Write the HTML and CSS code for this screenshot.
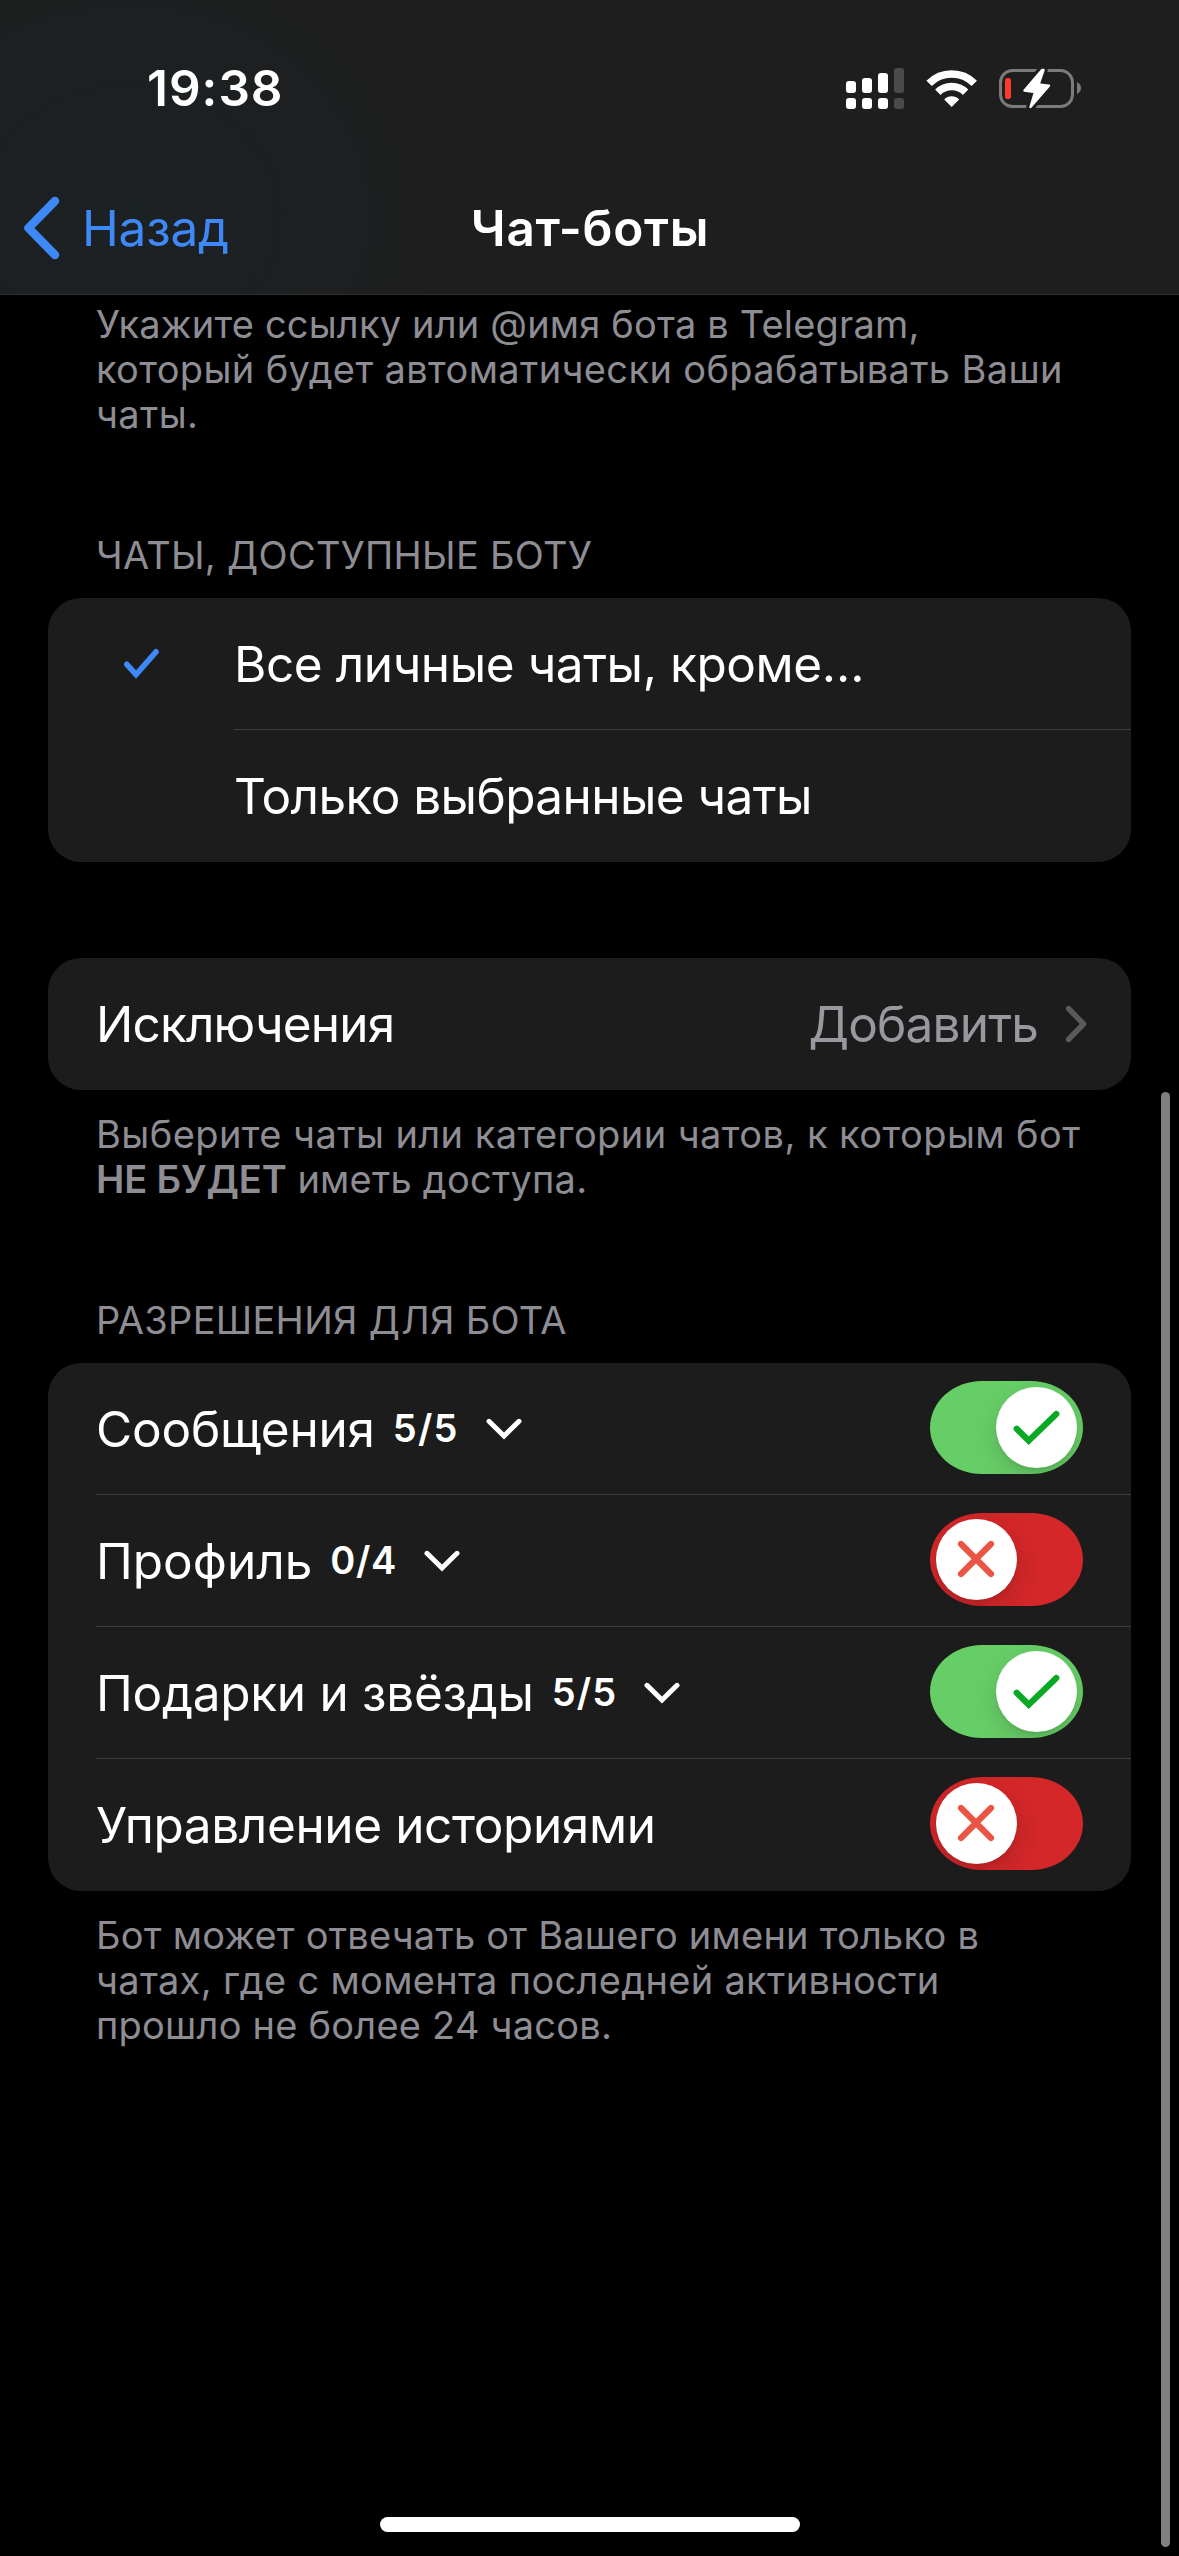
FILE: index.html
```
<!DOCTYPE html>
<html lang="ru">
<head>
<meta charset="utf-8">
<title>Чат-боты</title>
<link rel="stylesheet" href="styles.css">
</head>
<body>
<header class="header">
  <div class="status">
    <span class="time">19:38</span>
    <div class="status-icons">
      <svg class="cellular" width="60" height="42" viewBox="0 0 60 42" fill="#fff">
        <rect x="1" y="14" width="10" height="12" rx="3"/>
        <rect x="17" y="11" width="10" height="15" rx="3"/>
        <rect x="33" y="6" width="10" height="20" rx="3"/>
        <rect x="49" y="1" width="10" height="25" rx="3" fill="#4a4a4a"/>
        <rect x="1" y="31" width="10" height="11" rx="3"/>
        <rect x="17" y="31" width="10" height="11" rx="3"/>
        <rect x="33" y="31" width="10" height="11" rx="3"/>
        <rect x="49" y="31" width="10" height="11" rx="3" fill="#4a4a4a"/>
      </svg>
      <svg class="wifi" width="52" height="42" viewBox="0 0 52 42">
        <g fill="none" stroke="#fff" stroke-width="7.6">
          <path d="M3.1 16.4A32 32 0 0 1 48.3 16.4"/>
          <path d="M11.8 25.3A19.7 19.7 0 0 1 39.6 25.3"/>
        </g>
        <path d="M18.2 32.5A10.5 10.5 0 0 1 33.2 32.5L25.7 40Z" fill="#fff"/>
      </svg>
      <svg class="battery" width="84" height="42" viewBox="0 0 84 42">
        <rect x="2.5" y="3.5" width="72" height="36" rx="12" fill="none" stroke="#7b7b7b" stroke-width="3"/>
        <path d="M79 15Q83 17.5 83 21T79 27Z" fill="#7b7b7b"/>
        <rect x="7" y="11" width="6" height="21" rx="2.5" fill="#ff3b30"/>
        <path d="M44 3L26.5 23.5L37 25L32.5 40L51 18.7L40.5 17.5L45.5 3Z" fill="#1e1e1e" stroke="#1e1e1e" stroke-width="8.5" stroke-linejoin="round"/>
        <path d="M44 3L26.5 23.5L37 25L32.5 40L51 18.7L40.5 17.5L45.5 3Z" fill="#fff" stroke="#fff" stroke-width="2.4" stroke-linejoin="round"/>
      </svg>
    </div>
  </div>
  <nav class="nav">
    <a class="back">
      <svg width="38" height="64" viewBox="0 0 38 64" fill="none" stroke="currentColor" stroke-width="8.5" stroke-linecap="round" stroke-linejoin="round"><path d="M32 5L5.5 32L32 59"/></svg>
      <span>Назад</span>
    </a>
    <h1 class="title">Чат-боты</h1>
  </nav>
</header>

<main class="content">
  <p class="note note-top"><span class="sp-16">Укажите ссылку или @имя бота в Telegram,</span><br><span class="sp-38">который будет автоматически обрабатывать Ваши</span><br><span class="sp-38">чаты.</span></p>

  <h2 class="heading">ЧАТЫ, ДОСТУПНЫЕ БОТУ</h2>
  <section class="card card-choice">
    <div class="row choice">
      <div class="mark"><svg width="38" height="32" viewBox="0 0 38 32" fill="none" stroke="#3e88f7" stroke-width="5.6" stroke-linecap="round"><path d="M3.8 16.3L13 26.5L33 3.8"/></svg></div>
      <span class="label sp-n42">Все личные чаты, кроме…</span>
    </div>
    <div class="row choice">
      <div class="mark"></div>
      <span class="label sp-n58">Только выбранные чаты</span>
    </div>
  </section>

  <section class="card card-link">
    <div class="row link">
      <span class="label sp-n82">Исключения</span>
      <span class="value sp-n82">Добавить</span>
      <svg width="22" height="38" viewBox="0 0 22 38" fill="none" stroke="#5a5a5e" stroke-width="5.4" stroke-linecap="round" stroke-linejoin="round"><path d="M3.5 3.5L18.5 19L3.5 34.5"/></svg>
    </div>
  </section>
  <p class="note"><span class="sp-43">Выберите чаты или категории чатов, к которым бот</span><br><b>НЕ БУДЕТ</b> <span class="sp-23">иметь доступа.</span></p>

  <h2 class="heading">РАЗРЕШЕНИЯ ДЛЯ БОТА</h2>
  <section class="card">
    <div class="row">
      <span class="label sp-n20">Сообщения</span><span class="count">5/5</span>
      <svg class="expand" width="36" height="22" viewBox="0 0 36 22"><path d="M3 3.3L18 18L33 3.3"/></svg>
      <div class="toggle on"><div class="knob"><svg width="81" height="81" viewBox="0 0 81 81"><path d="M20.7 41.7L32.7 53.7L60.3 27"/></svg></div></div>
    </div>
    <div class="row">
      <span class="label">Профиль</span><span class="count count-zero">0/4</span>
      <svg class="expand" width="36" height="22" viewBox="0 0 36 22"><path d="M3 3.3L18 18L33 3.3"/></svg>
      <div class="toggle off"><div class="knob"><svg width="81" height="81" viewBox="0 0 81 81"><path d="M25 25L55 55M55 25L25 55"/></svg></div></div>
    </div>
    <div class="row">
      <span class="label sp-n28">Подарки и звёзды</span><span class="count">5/5</span>
      <svg class="expand" width="36" height="22" viewBox="0 0 36 22"><path d="M3 3.3L18 18L33 3.3"/></svg>
      <div class="toggle on"><div class="knob"><svg width="81" height="81" viewBox="0 0 81 81"><path d="M20.7 41.7L32.7 53.7L60.3 27"/></svg></div></div>
    </div>
    <div class="row">
      <span class="label sp-n39">Управление историями</span>
      <div class="toggle off"><div class="knob"><svg width="81" height="81" viewBox="0 0 81 81"><path d="M25 25L55 55M55 25L25 55"/></svg></div></div>
    </div>
  </section>
  <p class="note"><span class="sp-23">Бот может отвечать от Вашего имени только в</span><br><span class="sp-32">чатах, где с момента последней активности</span><br><span class="sp-23">прошло не более 24 часов.</span></p>
</main>

<div class="home-indicator"></div>
<div class="scrollbar"></div>
</body>
</html>
```
FILE: styles.css
```
* {
  box-sizing: border-box;
  margin: 0;
  padding: 0;
}

body {
  position: relative;
  display: flex;
  flex-direction: column;
  width: 1179px;
  height: 2556px;
  overflow: hidden;
  background: #000;
  color: #fff;
  font-family: Inter, "Liberation Sans", sans-serif;
  font-size: 49.5px;
}

svg {
  display: block;
  flex: none;
}

/* Header */
.header {
  height: 295px;
  border-bottom: 1px solid #303031;
  background: radial-gradient(ellipse 330px 290px at 130px 215px, #1c2124 0%, #1d2022 45%, #1e1e1e 100%);
}

.status {
  display: flex;
  align-items: center;
  justify-content: space-between;
  height: 162px;
  padding: 14px 97px 0 147px;
}

.time {
  font-weight: 600;
  letter-spacing: 1px;
}

.status-icons {
  display: flex;
  align-items: center;
}

.wifi {
  margin-left: 21px;
}

.battery {
  margin-left: 20px;
}

.nav {
  display: grid;
  grid-template-columns: 1fr auto 1fr;
  align-items: center;
  height: 132px;
  padding: 0 22px 0 23px;
}

.back {
  display: flex;
  align-items: center;
  gap: 21px;
  color: #3e88f7;
  letter-spacing: -0.2px;
}

.title {
  font-size: 49.5px;
  font-weight: 600;
  letter-spacing: 0.7px;
}

/* Section texts */
.note,
.heading {
  margin: 0 96px;
  color: #8d8d93;
  font-size: 38px;
  font-weight: 400;
  line-height: 45px;
  white-space: nowrap;
}

.note {
  padding-top: 22px;
}

.note-top {
  padding-top: 7px;
}

.note b {
  font-weight: 600;
  letter-spacing: -0.1px;
}

.heading {
  margin-top: 96px;
  margin-bottom: 20px;
  letter-spacing: 0.3px;
}

/* Cards */
.card {
  margin: 0 48px;
  border-radius: 33px;
  background: #1c1c1d;
}

.card-link {
  margin-top: 96px;
}

.row {
  position: relative;
  display: flex;
  align-items: center;
  height: 132px;
  padding: 0 48px;
  white-space: nowrap;
}

.row:not(:last-child)::after {
  content: "";
  position: absolute;
  right: 0;
  bottom: 0;
  left: 48px;
  height: 1px;
  background: #3d3d40;
}

.choice {
  padding-left: 0;
}

.choice:not(:last-child)::after {
  left: 186px;
}

.mark {
  width: 186px;
  padding-left: 75px;
}

.link {
  justify-content: space-between;
  padding-right: 44px;
}

.value {
  margin-left: auto;
  margin-right: 27px;
  color: #98989e;
}

.count {
  margin-left: 18px;
  font-size: 38px;
  font-weight: 600;
  letter-spacing: 1.2px;
  line-height: 45px;
  padding-bottom: 2px;
}

.count-zero {
  letter-spacing: 0.6px;
}

.expand {
  margin-left: 27px;
  fill: none;
  stroke: #fff;
  stroke-width: 5;
  stroke-linecap: round;
}

/* Toggles */
.toggle {
  display: flex;
  width: 153px;
  height: 93px;
  margin: 0 0 3px auto;
  padding: 6px;
  border-radius: 52px / 46.5px;
  overflow: hidden;
}

.on {
  justify-content: flex-end;
  background: #67ce67;
}

.off {
  background: #d32729;
}

.knob {
  width: 81px;
  height: 81px;
  border-radius: 50%;
  background: #fff;
  box-shadow: 0 9px 24px rgba(0, 0, 0, 0.15), 0 3px 3px rgba(0, 0, 0, 0.06);
}

.knob path {
  fill: none;
  stroke-width: 6.2;
  stroke-linecap: round;
}

.on path {
  stroke: #09a923;
}

.off path {
  stroke: #eb5545;
}

/* Tracking adjustments */
.sp-16 { letter-spacing: 0.18px; }
.sp-23 { letter-spacing: 0.23px; }
.sp-32 { letter-spacing: 0.32px; }
.sp-38 { letter-spacing: 0.37px; }
.sp-43 { letter-spacing: 0.43px; }
.sp-n20 { letter-spacing: -0.2px; }
.sp-n28 { letter-spacing: -0.28px; }
.sp-n39 { letter-spacing: -0.39px; }
.sp-n42 { letter-spacing: -0.42px; }
.sp-n58 { letter-spacing: -0.58px; }
.sp-n82 { letter-spacing: -0.82px; }

.home-indicator {
  width: 420px;
  height: 15px;
  margin: auto auto 24px;
  border-radius: 8px;
  background: #fff;
}

.scrollbar {
  position: absolute;
  top: 1092px;
  right: 9px;
  width: 9px;
  height: 1455px;
  border-radius: 5px;
  background: #808080;
}
```
